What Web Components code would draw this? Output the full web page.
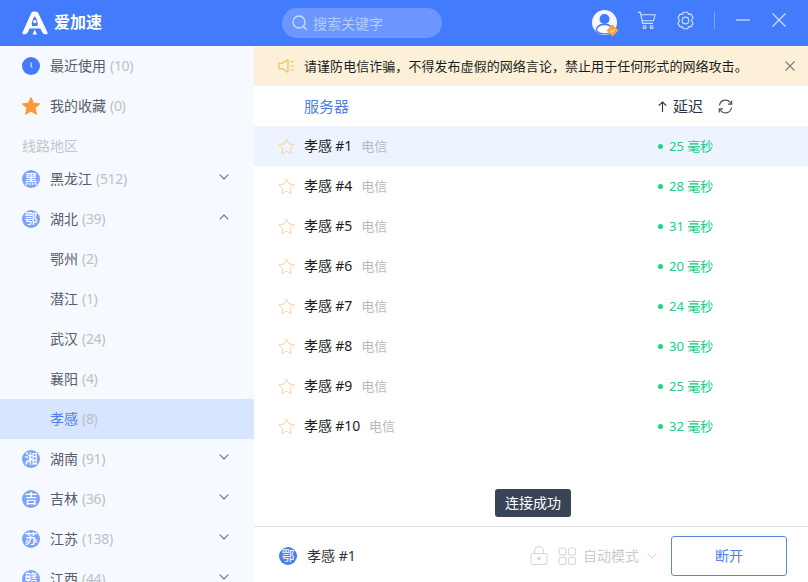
<!DOCTYPE html>
<html lang="zh"><head><meta charset="utf-8"><title>爱加速</title>
<style>
html,body{margin:0;padding:0;width:808px;height:582px;overflow:hidden;background:#fff}
body{font-family:"Noto Sans","Noto Sans CJK SC",sans-serif;font-size:14px}
</style></head><body>
<app-shell>
  <app-header slot="header"></app-header>
  <app-sidebar slot="side">
    <side-item icon="clock" count="10">最近使用</side-item>
    <side-item icon="star" count="0">我的收藏</side-item>
    <side-label>线路地区</side-label>
    <side-item badge="黑" count="512" chevron="down">黑龙江</side-item>
    <side-item badge="鄂" count="39" chevron="up">湖北</side-item>
    <side-item count="2">鄂州</side-item>
    <side-item count="1">潜江</side-item>
    <side-item count="24">武汉</side-item>
    <side-item count="4">襄阳</side-item>
    <side-item count="8" selected>孝感</side-item>
    <side-item badge="湘" count="91" chevron="down">湖南</side-item>
    <side-item badge="吉" count="36" chevron="down">吉林</side-item>
    <side-item badge="苏" count="138" chevron="down">江苏</side-item>
    <side-item badge="赣" count="44" chevron="down">江西</side-item>
  </app-sidebar>
  <notice-bar slot="main">请谨防电信诈骗，不得发布虚假的网络言论，禁止用于任何形式的网络攻击。</notice-bar>
  <list-head slot="main"></list-head>
  <server-row slot="main" name="孝感 #1" ms="25" active></server-row>
  <server-row slot="main" name="孝感 #4" ms="28"></server-row>
  <server-row slot="main" name="孝感 #5" ms="31"></server-row>
  <server-row slot="main" name="孝感 #6" ms="20"></server-row>
  <server-row slot="main" name="孝感 #7" ms="24"></server-row>
  <server-row slot="main" name="孝感 #8" ms="30"></server-row>
  <server-row slot="main" name="孝感 #9" ms="25"></server-row>
  <server-row slot="main" name="孝感 #10" ms="32"></server-row>
  <toast-tip slot="main">连接成功</toast-tip>
  <connect-bar slot="foot"></connect-bar>
</app-shell>
<script>
const def=(n,html)=>customElements.define(n,class extends HTMLElement{
  connectedCallback(){ if(this.shadowRoot)return; const r=this.attachShadow({mode:'open'}); r.innerHTML=typeof html==='function'?html(this):html; }
});
def('app-shell',`<style>
:host{display:grid;width:808px;height:582px;grid-template-columns:254px 554px;grid-template-rows:46px 480px 56px;overflow:hidden}
.h{grid-column:1/3;grid-row:1}
.s{grid-column:1;grid-row:2/4;overflow:hidden;background:#f6f9ff;min-height:0}
.m{grid-column:2;grid-row:2;position:relative;overflow:hidden;background:#fff}
.f{grid-column:2;grid-row:3}
</style><div class="h"><slot name="header"></slot></div><div class="s"><slot name="side"></slot></div><div class="m"><slot name="main"></slot></div><div class="f"><slot name="foot"></slot></div>`);
def('app-header',`<style>
:host{display:flex;align-items:center;height:46px;background:#437bfd;color:#fff;position:relative}
.logo{display:flex;align-items:center;margin-left:22px;width:260px;gap:6px}
.logo b{font-size:16px;font-weight:700;letter-spacing:0;line-height:24px;position:relative;top:-1px}
.search{width:160px;height:30px;border-radius:15px;background:#6c97ff;display:flex;align-items:center;box-sizing:border-box;padding-left:10px;color:#b5ccff;font-size:14px;gap:5px}
.search span{margin-top:-1px}
.r{display:flex;align-items:center;margin-left:auto}
svg{display:block}
</style>
<div class="logo"><svg width="26" height="24" viewBox="0 0 26 24"><path d="M9.500 1.500Q10.300.500 12.800.500 15.200.500 16 1.500L25.500 21.500Q26 23.500 24 23.500 21 23.300 20 21L18.500 17.500 7.500 17.500 6 21Q5 23.300 2 23.500 0 23.500.5 21.500Z" fill="#fff"/><path d="M12.800 5.300Q15.600 8 15.700 12.300L15.500 15 10 15 9.800 12.300Q10 8 12.800 5.300Z" fill="#437bfd"/><circle cx="12.800" cy="10.500" r="1.700" fill="#fff"/><path d="M10.500 23.500 12.800 18.500 15 23.500Z" fill="#fff"/></svg><b>爱加速</b></div>
<div class="search"><svg width="16" height="16" viewBox="0 0 16 16" fill="none" stroke="#c9dbff" stroke-width="1.300"><circle cx="7" cy="7" r="6"/><path d="M11.300 11.300 15 15"/></svg><span>搜索关键字</span></div>
<div class="r">
<svg width="28" height="28" viewBox="0 0 28 28" style="margin:1px 18px 0 0"><circle cx="12.500" cy="12.500" r="12.500" fill="#f4f7ff"/><circle cx="12.500" cy="9" r="5" fill="#437bfd"/><path d="M3.500 20.500c.8-4.500 4-7 9-7s8 2.500 9 7a12 12 0 0 1-18 0Z" fill="#437bfd"/><path d="M4.800 20c1-3 3.800-4.700 7.700-4.700s7 1.700 8 4.700a11 11 0 0 1-15.700 0Z" fill="#fff"/><path d="M20.500 14.500l6 6-6 6-6-6Z" fill="#f6a63b"/><path d="M18.300 20.500l1.800 1.800 2.700-3.200" fill="none" stroke="#fff" stroke-width="1"/></svg>
<svg width="19" height="19" viewBox="0 0 20 19" fill="none" stroke="#cfdeff" stroke-width="1.200" style="margin:-5px 20px 0 -1px"><path d="M1 1h2.600l2.300 11.500h11"/><path d="M4.200 3.500H19l-1.600 6.300H5.500"/><rect x="6.500" y="15" width="2.800" height="2.800" rx=".8"/><rect x="14" y="15" width="2.800" height="2.800" rx=".8"/></svg>
<svg width="19" height="19" viewBox="0 0 20 20" fill="none" stroke="#cfdeff" stroke-width="1.200" style="margin:-6px 19px 0 0"><path d="M7.800 1.300h4.400l1 2.200 2.500-.2 2.200 3.400-1.500 3.300 1.500 3.300-2.200 3.400-2.500-.2-1 2.200H7.800l-1-2.200-2.500.2-2.200-3.400L3.600 10 2.100 6.700l2.200-3.400 2.500.2Z" stroke-linejoin="round"/><circle cx="10" cy="10" r="3.500"/></svg>
<div style="width:1px;height:17px;background:#82a6fc;margin:-6px 21px 0 0"></div>
<svg width="14" height="2" viewBox="0 0 14 2" style="margin:-6px 22px 0 0"><path d="M0 1h14" stroke="#cfdeff" stroke-width="1.300"/></svg>
<svg width="14" height="14" viewBox="0 0 14 14" style="margin:-6px 22px 0 0"><path d="M.5.500l13 13M13.500.500l-13 13" stroke="#cfdeff" stroke-width="1.200"/></svg>
</div>`);
const chev=d=>`<svg class="c" width="10" height="6" viewBox="0 0 10 6" fill="none" stroke="#667080" stroke-width="1.100"><path d="${d==='up'?'M.7 5.300 5 1l4.300 4.300':'M.7.700 5 5 9.300.700'}"/></svg>`;
def('side-item',el=>{
 const ic=el.getAttribute('icon'),b=el.getAttribute('badge'),c=el.getAttribute('chevron'),sel=el.hasAttribute('selected');
 let lead='';
 if(ic==='clock')lead=`<svg width="18" height="18" viewBox="0 0 18 18"><circle cx="9" cy="9" r="9" fill="#437bfd"/><path d="M9 5.500v3.800l1.500 1.200" fill="none" stroke="#fff" stroke-width="1"/></svg>`;
 else if(ic==='star')lead=`<svg width="18" height="18" viewBox="0 0 18 18"><path d="M9 .5l2.600 5.700 6.100.7-4.500 4.200 1.200 6.200L9 14.200l-5.400 3.100 1.200-6.200L.3 6.900l6.100-.7Z" fill="#fb9a36" stroke="#fb9a36" stroke-linejoin="round"/></svg>`;
 else if(b)lead=`<span class="b">${b}</span>`;
 return `<style>
 :host{display:flex;align-items:center;height:40px;padding:0 24px 0 22px;box-sizing:border-box;color:#565e6c;font-size:14px;${sel?'background:#d8e5ff;':''}}
 .l{width:18px;height:18px;margin-right:10px;flex:none}
 svg{display:block}
 .b{display:block;width:18px;height:18px;border-radius:50%;background:#7ea2f8;color:#fff;font-size:13px;font-weight:500;line-height:17px;text-align:center;overflow:hidden}
 .t{white-space:nowrap;margin-bottom:2px;${sel?'color:#4f7fe6;':''}}
 .n{color:#bcc0c7;margin:0 0 2px 4px;white-space:nowrap;letter-spacing:-.3px}
 .c{margin-left:auto;margin-top:-4px;margin-right:1px}
 </style><span class="l">${lead}</span><span class="t"><slot></slot></span><span class="n">(${el.getAttribute('count')})</span>${c?chev(c):''}`;
});
def('side-label',`<style>:host{display:block;height:33px;line-height:40px;padding-left:22px;color:#c2c6cc;font-size:14px;box-sizing:border-box}</style><slot></slot>`);
def('notice-bar',`<style>
:host{display:flex;align-items:center;height:40px;background:#fdf0d8;font-size:13px;color:#1a1d22;white-space:nowrap}
svg{display:block;flex:none}
span{margin-bottom:2px}
</style><svg width="17" height="14" viewBox="0 0 17 14" fill="none" stroke="#f1bf55" stroke-width="1.200" style="margin:0 9px 0 24px"><path d="M1 4.200h3.300L10 .8v12.400L4.300 9.800H1Z" stroke-linejoin="round"/><path d="M12.700 3.500 15.500 2M12.700 7H16M12.700 10.500 15.500 12"/></svg><span style="flex:1;letter-spacing:.05px"><slot></slot></span><svg width="10" height="10" viewBox="0 0 10 10" style="margin-right:13px"><path d="M.5.500l9 9M9.500.500l-9 9" stroke="#7b7f85" stroke-width="1.100"/></svg>`);
def('list-head',`<style>
:host{display:flex;align-items:center;height:40px;font-size:15px;color:#2c3340}
.s{color:#4f7fe6;margin-left:50px;width:354px;margin-bottom:2px}
.d{margin-bottom:2px}
svg{display:block}
</style><span class="s">服务器</span><svg width="9" height="11" viewBox="0 0 9 11" fill="none" stroke="#2c3340" stroke-width="1.100" style="margin-right:6px"><path d="M4.500 11V1M.7 4.700 4.500 1l3.800 3.700"/></svg><span class="d">延迟</span><svg width="15" height="15" viewBox="0 0 15 15" fill="none" stroke="#555" stroke-width="1.200" style="margin-left:15px"><path d="M1.500 6.500A6 6 0 0 1 12 3.200L13.500 5M13.500 8.500A6 6 0 0 1 3 11.800L1.500 10"/><path d="M13.700 1.500v3.700H10M1.300 13.500V9.800H5"/></svg>`);
def('server-row',el=>{
 const act=el.hasAttribute('active');
 return `<style>
 :host{display:flex;align-items:center;height:40px;font-size:14px;color:#1a1d22;position:relative;${act?'background:#edf3ff;':''}}
 .n{margin:0 0 2px 9px;white-space:nowrap;letter-spacing:-.1px}
 .k{color:#b6b9bf;margin:0 0 2px 9px;font-size:13px;white-space:nowrap}
 .m{position:absolute;left:404px;top:11px;color:#22cc88;white-space:nowrap;font-size:13px;display:flex;align-items:center;line-height:18px}
 .m i{width:5px;height:5px;border-radius:50%;background:#1ed488;margin-right:6px}
 svg{display:block;margin-left:24px;flex:none}
 </style><svg width="17" height="17" viewBox="0 0 17 17" fill="none" stroke="#f7d3a3" stroke-width="1"><path d="M8.500 1l2.300 5 5.400.6-4 3.800 1.100 5.400-4.800-2.700-4.800 2.700 1.100-5.400-4-3.800 5.400-.6Z" stroke-linejoin="round"/></svg><span class="n">${el.getAttribute('name')}</span><span class="k">电信</span><span class="m"><i></i>${el.getAttribute('ms')} 毫秒</span>`;
});
def('toast-tip',`<style>
:host{position:absolute;left:241px;top:443px;width:76px;height:28px;border-radius:3px;background:#394456;color:#fff;font-size:14px;line-height:27px;text-align:center}
</style><slot></slot>`);
def('connect-bar',`<style>
:host{display:flex;align-items:center;height:56px;box-sizing:border-box;border-top:1px solid #dcdfe3;padding-top:2px;background:#fff;font-size:14px;color:#2c3340}
.b{width:18px;height:18px;border-radius:50%;background:#4c7fe8;color:#fff;font-size:13px;line-height:17px;text-align:center;margin-left:25px;flex:none;overflow:hidden}
.x{margin-bottom:2px;white-space:nowrap}
svg{display:block;flex:none}
.btn{width:116px;height:40px;box-sizing:border-box;border:1px solid #5d88d8;border-radius:3px;color:#4f7fe6;font-size:14px;line-height:37px;text-align:center;margin-left:14px}
</style><span class="b">鄂</span><span class="x" style="margin-left:10px;width:223px">孝感 #1</span>
<svg width="18" height="19" viewBox="0 0 18 19" fill="none" stroke="#d5d7da" stroke-width="1.100"><rect x="1" y="7.500" width="16" height="11" rx="1.500"/><path d="M4.500 7.500V5a4.500 4.500 0 0 1 9 0v2.500"/><circle cx="9" cy="12.500" r="1.200" fill="#d5d7da"/></svg>
<svg width="18" height="18" viewBox="0 0 18 18" fill="none" stroke="#d5d7da" stroke-width="1.100" style="margin-left:10px"><rect x="1" y="1" width="7" height="7" rx="2"/><rect x="10.500" y="1" width="7" height="7" rx="2"/><rect x="1" y="10.500" width="7" height="7" rx="2"/><rect x="10.500" y="10.500" width="7" height="7" rx="2"/></svg>
<span class="x" style="color:#c9cbcf;margin-left:7px">自动模式</span>
<svg width="10" height="6" viewBox="0 0 10 6" fill="none" stroke="#d5d7da" stroke-width="1" style="margin-left:8px"><path d="M.5.500 5 5l4.500-4.500"/></svg>
<span class="btn">断开</span>`);
</script>
</body></html>
